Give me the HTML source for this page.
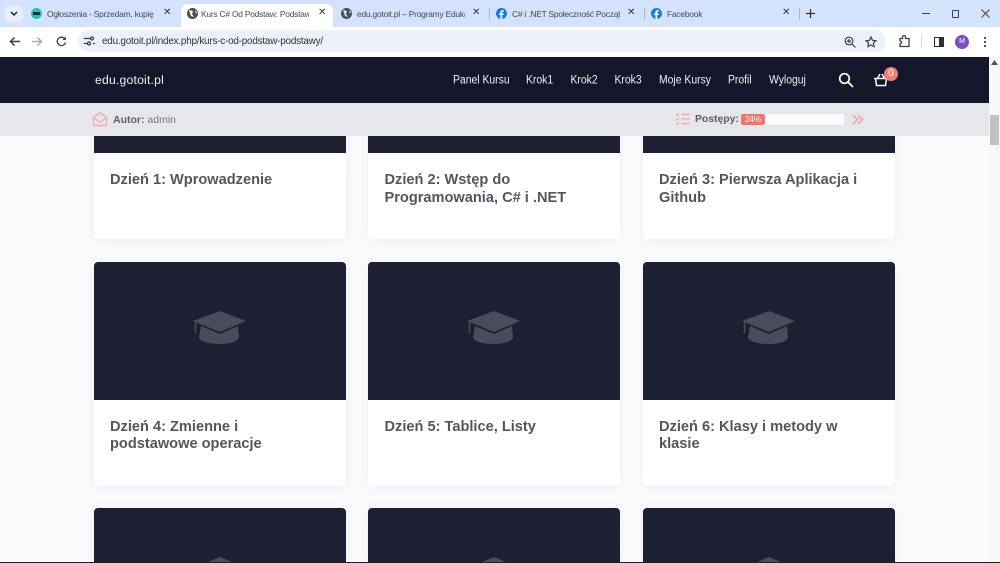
<!DOCTYPE html>
<html lang="pl"><head><meta charset="utf-8"><title>Kurs C#</title>
<style>
html,body{margin:0;padding:0;width:1000px;height:563px;overflow:hidden;background:#fafafc;font-family:"Liberation Sans",sans-serif}
#wrap{position:relative;width:1000px;height:563px;overflow:hidden;background:#fbfbfd}
.a{position:absolute}
#chrome{left:0;top:0;width:1000px;height:57px;background:#fff}
#tabs{left:0;top:0;width:1000px;height:27px;background:#d3e3fd}
.tab{position:absolute;top:8px;font-size:8.4px;letter-spacing:-.2px;color:#44474c;white-space:nowrap;overflow:hidden;height:12px;line-height:12px}
.x{position:absolute;top:7px;font-size:10px;color:#333;line-height:12px}
.sep{position:absolute;top:8px;width:1px;height:12px;background:#a9b6cc}
#nav a{position:absolute;top:73px;color:#eeeef2;line-height:15px;white-space:nowrap;font-size:10.400px;transform:scaleY(1.120)}
.card{position:absolute;width:252px;background:#fff;border-radius:4px;box-shadow:0 2px 14px rgba(30,30,60,.06)}
.img{position:absolute;left:0;top:0;width:252px;background:#1d1f33;border-radius:4px 4px 0 0}
.t{position:absolute;left:16px;width:232px;font-weight:700;font-size:14.600px;line-height:17.500px;color:#55555f;white-space:nowrap}
.cap{position:absolute}
</style></head><body><div id="wrap">

<!-- cards row 1 -->
<div class="card" style="left:94px;top:100px;height:139px"><div class="img" style="height:53px;border-radius:0"></div><div class="t" style="top:72px">Dzień 1: Wprowadzenie</div></div>
<div class="card" style="left:368px;top:100px;height:139px"><div class="img" style="height:53px;border-radius:0"></div><div class="t" style="top:72px;left:16.500px">Dzień 2: Wstęp do<br>Programowania, C# i .NET</div></div>
<div class="card" style="left:643px;top:100px;height:139px"><div class="img" style="height:53px;border-radius:0"></div><div class="t" style="top:72px">Dzień 3: Pierwsza Aplikacja i<br>Github</div></div>

<!-- row 2 -->
<div class="card" style="left:94px;top:262px;height:224px"><div class="img" style="height:138px"></div><svg class="cap" style="left:99px;top:47px" width="54" height="38" viewBox="0 0 54 38"><path d="M8 17 27 25 45 17 46 28C46 32 38 35 26.500 35 15 35 6 32 6 28Z" fill="#4a4b5b"/><path d="M27 2 53 12 27 23 0 12z" fill="#4a4b5b"/><path d="M2.500 13v11" stroke="#4a4b5b" stroke-width="1.500"/></svg><div class="t" style="top:156.500px">Dzień 4: Zmienne i<br>podstawowe operacje</div></div>
<div class="card" style="left:368px;top:262px;height:224px"><div class="img" style="height:138px"></div><svg class="cap" style="left:99px;top:47px" width="54" height="38" viewBox="0 0 54 38"><path d="M8 17 27 25 45 17 46 28C46 32 38 35 26.500 35 15 35 6 32 6 28Z" fill="#4a4b5b"/><path d="M27 2 53 12 27 23 0 12z" fill="#4a4b5b"/><path d="M2.500 13v11" stroke="#4a4b5b" stroke-width="1.500"/></svg><div class="t" style="top:156.500px;left:16.500px">Dzień 5: Tablice, Listy</div></div>
<div class="card" style="left:643px;top:262px;height:224px"><div class="img" style="height:138px"></div><svg class="cap" style="left:99px;top:47px" width="54" height="38" viewBox="0 0 54 38"><path d="M8 17 27 25 45 17 46 28C46 32 38 35 26.500 35 15 35 6 32 6 28Z" fill="#4a4b5b"/><path d="M27 2 53 12 27 23 0 12z" fill="#4a4b5b"/><path d="M2.500 13v11" stroke="#4a4b5b" stroke-width="1.500"/></svg><div class="t" style="top:156.500px">Dzień 6: Klasy i metody w<br>klasie</div></div>

<!-- row 3 -->
<div class="card" style="left:94px;top:508px;height:55px"><div class="img" style="height:55px"><svg class="cap" style="left:99px;top:47px" width="54" height="7" viewBox="0 0 54 7"><path d="M27 2 39 7H15z" fill="#4a4b5b"/></svg></div></div>
<div class="card" style="left:368px;top:508px;height:55px"><div class="img" style="height:55px"><svg class="cap" style="left:99px;top:47px" width="54" height="7" viewBox="0 0 54 7"><path d="M27 2 39 7H15z" fill="#4a4b5b"/></svg></div></div>
<div class="card" style="left:643px;top:508px;height:55px"><div class="img" style="height:55px"><svg class="cap" style="left:99px;top:47px" width="54" height="7" viewBox="0 0 54 7"><path d="M27 2 39 7H15z" fill="#4a4b5b"/></svg></div></div>

<div class="a" style="left:0;top:562px;width:1000px;height:1px;background:#222"></div>

<!-- author bar -->
<div class="a" style="left:0;top:103px;width:989px;height:33px;background:#e6e6ec"></div>
<svg class="a" style="left:92px;top:111px" width="16" height="16" viewBox="0 0 16 16" fill="none" stroke="#f0a9a4" stroke-width="1.200"><path d="M1.500 6.500 8 1.500l6.500 5V13a1.500 1.500 0 0 1-1.500 1.500H3A1.500 1.500 0 0 1 1.500 13z"/><path d="M1.500 7 8 11l6.500-4"/></svg>
<div class="a" style="left:113px;top:112.500px;font-size:10.500px;line-height:14px;color:#5d5d69;white-space:nowrap"><b>Autor:</b> <span style="color:#777782">admin</span></div>
<svg class="a" style="left:676px;top:112px" width="14" height="14" viewBox="0 0 14 14" fill="none" stroke="#f0a9a4" stroke-width="1.300"><path d="M5.500 2.500H14M5.500 7H14M5.500 11.500H14M0 2.500l1 1 2-2M0 7l1 1 2-2M0 11.500l1 1 2-2"/></svg>
<div class="a" style="left:695px;top:112.500px;font-size:10.400px;line-height:14px;font-weight:700;color:#5d5d69">Postępy:</div>
<div class="a" style="left:741px;top:114px;width:103px;height:11px;background:#fbfbfd;border-radius:2px"></div>
<div class="a" style="left:741px;top:114px;width:24px;height:11px;background:#f0756c;border-radius:2px;color:#fff;font-size:8px;line-height:11px;text-align:center">24%</div>
<svg class="a" style="left:852px;top:114px" width="12" height="11" viewBox="0 0 12 11" fill="none" stroke="#f0a9a4" stroke-width="1.800"><path d="M1 1l4.500 4.500L1 10M6 1l4.500 4.500L6 10"/></svg>

<!-- site header -->
<div class="a" style="left:0;top:57px;width:989px;height:46px;background:#14162a"></div>
<div class="a" style="left:95px;top:72.500px;color:#f0f0f4;font-size:12.200px;letter-spacing:.2px;line-height:15px;white-space:nowrap">edu.gotoit.pl</div>
<div id="nav">
<a style="left:453px">Panel Kursu</a><a style="left:526px">Krok1</a><a style="left:570.500px">Krok2</a><a style="left:614.500px">Krok3</a><a style="left:659px">Moje Kursy</a><a style="left:728px">Profil</a><a style="left:769px">Wyloguj</a>
</div>
<svg class="a" style="left:838px;top:72px" width="16" height="16" viewBox="0 0 16 16" fill="none" stroke="#fff" stroke-width="1.700"><circle cx="6.500" cy="6.500" r="4.800"/><path d="M10 10l5 5"/></svg>
<svg class="a" style="left:873px;top:72px" width="16" height="16" viewBox="0 0 16 16" fill="none" stroke="#fff" stroke-width="1.500"><path d="M1 6.500h14M2.500 6.500l1 7h9l1-7M4.500 6.500 7 2M11.500 6.500 9 2"/></svg>
<div class="a" style="left:884px;top:67px;width:14px;height:14px;border-radius:50%;background:#ef7f79;color:#fff;font-size:10px;line-height:14px;text-align:center">0</div>

<!-- scrollbar -->
<div class="a" style="left:989px;top:57px;width:11px;height:505px;background:#f8f8f8"></div>
<div class="a" style="left:990px;top:115px;width:9px;height:30px;background:#c1c1c1"></div>
<svg class="a" style="left:991px;top:60px" width="7" height="5"><path d="M0 5 3.500 0 7 5z" fill="#555"/></svg>

<!-- browser chrome -->
<div class="a" id="chrome"></div>
<div class="a" id="tabs"></div>
<div class="a" style="left:5px;top:6px;width:18px;height:16px;border-radius:5px;background:#e8effc"></div>
<svg class="a" style="left:10px;top:11px" width="8" height="6" fill="none" stroke="#222" stroke-width="1.500"><path d="M1 1l3 3 3-3"/></svg>
<div class="a" style="left:181px;top:4px;width:152px;height:23px;background:#fff;border-radius:7px 7px 0 0"></div>

<div class="a" style="left:31px;top:8px;width:11px;height:11px;border-radius:50%;background:#1cc5b7"></div>
<div class="a" style="left:33px;top:12px;width:7px;height:3px;background:#123"></div>
<div class="tab" style="left:47px;width:108px">Ogłoszenia - Sprzedam, kupię na</div><div class="x" style="left:163px">✕</div>
<svg class="a" style="left:187px;top:8px" width="11" height="11" viewBox="0 0 11 11"><circle cx="5.500" cy="5.500" r="5.500" fill="#4a4d52"/><path d="M2 2l4 1-1 3 2 3-3-1-1-3zM8 2l2 2-1 2z" fill="#fff"/></svg>
<div class="tab" style="left:201px;width:108px">Kurs C# Od Podstaw: Podstawy</div><div class="x" style="left:318px">✕</div>
<svg class="a" style="left:341px;top:8px" width="11" height="11" viewBox="0 0 11 11"><circle cx="5.500" cy="5.500" r="5.500" fill="#4a4d52"/><path d="M2 2l4 1-1 3 2 3-3-1-1-3zM8 2l2 2-1 2z" fill="#d3e3fd"/></svg>
<div class="tab" style="left:357px;width:108px">edu.gotoit.pl – Programy Edukac</div><div class="x" style="left:472px">✕</div>
<div class="sep" style="left:489px"></div>
<svg class="a" style="left:496px;top:8px" width="11" height="11" viewBox="0 0 11 11"><circle cx="5.500" cy="5.500" r="5.500" fill="#1877f2"/><path d="M6.200 11V7h1.300l.3-1.600H6.200v-1c0-.5.200-.8.800-.8h.8V2.200C7.400 2.100 7 2.100 6.600 2.100c-1.300 0-2.100.8-2.100 2.100v1.200H3.200V7h1.300v4z" fill="#fff"/></svg>
<div class="tab" style="left:512px;width:108px">C# i .NET Społeczność Początku</div><div class="x" style="left:627px">✕</div>
<div class="sep" style="left:644px"></div>
<svg class="a" style="left:651px;top:8px" width="11" height="11" viewBox="0 0 11 11"><circle cx="5.500" cy="5.500" r="5.500" fill="#1877f2"/><path d="M6.200 11V7h1.300l.3-1.600H6.200v-1c0-.5.200-.8.800-.8h.8V2.200C7.400 2.100 7 2.100 6.600 2.100c-1.300 0-2.100.8-2.100 2.100v1.200H3.200V7h1.300v4z" fill="#fff"/></svg>
<div class="tab" style="left:667px;width:108px">Facebook</div><div class="x" style="left:782px">✕</div>
<div class="sep" style="left:799px"></div>
<svg class="a" style="left:806px;top:9px" width="9" height="9" stroke="#333" stroke-width="1.200"><path d="M4.500 0v9M0 4.500h9"/></svg>
<div class="a" style="left:922px;top:13px;width:8px;height:1px;background:#444"></div>
<div class="a" style="left:952px;top:10px;width:5px;height:6px;border:1px solid #444;border-radius:1px"></div>
<svg class="a" style="left:981px;top:9px" width="9" height="9" stroke="#444" stroke-width="1"><path d="M.5.500l8 8M8.500.500l-8 8"/></svg>

<svg class="a" style="left:9px;top:36px" width="11" height="11" fill="none" stroke="#3c3f44" stroke-width="1.500"><path d="M11 5.500H1.500M5.500 1.500l-4 4 4 4"/></svg>
<svg class="a" style="left:32px;top:36px" width="11" height="11" fill="none" stroke="#a4a7ab" stroke-width="1.400"><path d="M0 5.500h9.500M5.500 1.500l4 4-4 4"/></svg>
<svg class="a" style="left:56px;top:36px" width="11" height="11" viewBox="0 0 11 11" fill="none" stroke="#3c3f44" stroke-width="1.300"><path d="M9.500 6.500A4.200 4.200 0 1 1 8.500 2.500"/><path d="M9.800 0.500v3.500h-3.500z" fill="#3c3f44" stroke="none"/></svg>
<div class="a" style="left:78px;top:30px;width:808px;height:22px;border-radius:11px;background:#edf2fa"></div>
<svg class="a" style="left:84px;top:36px" width="11" height="10" stroke="#3c3f44" stroke-width="1.300" fill="none"><path d="M0 2.500h6M9 7.500h2M0 7.500h3"/><circle cx="8" cy="2.500" r="1.500"/><circle cx="5" cy="7.500" r="1.500"/></svg>
<div class="a" style="left:102px;top:36px;font-size:9.900px;letter-spacing:-.2px;line-height:12px;color:#2f3237;white-space:nowrap">edu.gotoit.pl/index.php/kurs-c-od-podstaw-podstawy/</div>
<svg class="a" style="left:844px;top:36px" width="12" height="12" fill="none" stroke="#3c3f44" stroke-width="1.200"><circle cx="5" cy="5" r="3.800"/><path d="M8 8l3.500 3.500M3 5h4M5 3v4"/></svg>
<svg class="a" style="left:865px;top:36px" width="12" height="12" viewBox="0 0 12 12" fill="none" stroke="#3c3f44" stroke-width="1.200"><path d="M6 1l1.500 3.300 3.500.4-2.600 2.400.7 3.500L6 8.900 2.900 10.600l.7-3.500L1 4.700l3.500-.4z"/></svg>
<svg class="a" style="left:898px;top:35px" width="13" height="13" viewBox="0 0 13 13" fill="none" stroke="#3c3f44" stroke-width="1.300"><path d="M2 3.500h2.500V2a1.500 1.500 0 0 1 3 0v1.500H11V11.500H2V9a1.500 1.500 0 0 0 0-3z"/></svg>
<div class="a" style="left:921px;top:36px;width:1px;height:11px;background:#d5d8dd"></div>
<div class="a" style="left:934px;top:37px;width:8px;height:8px;border:1px solid #2c2f33;background:linear-gradient(90deg,#fff 50%,#2c2f33 50%)"></div>
<div class="a" style="left:955px;top:35px;width:14px;height:14px;border-radius:50%;background:#7e4fc0;color:#fff;font-size:7px;line-height:14px;text-align:center">M</div>
<svg class="a" style="left:983px;top:36px" width="4" height="12" fill="#3c3f44"><circle cx="2" cy="2" r="1.100"/><circle cx="2" cy="6" r="1.100"/><circle cx="2" cy="10" r="1.100"/></svg>
</div></body></html>
